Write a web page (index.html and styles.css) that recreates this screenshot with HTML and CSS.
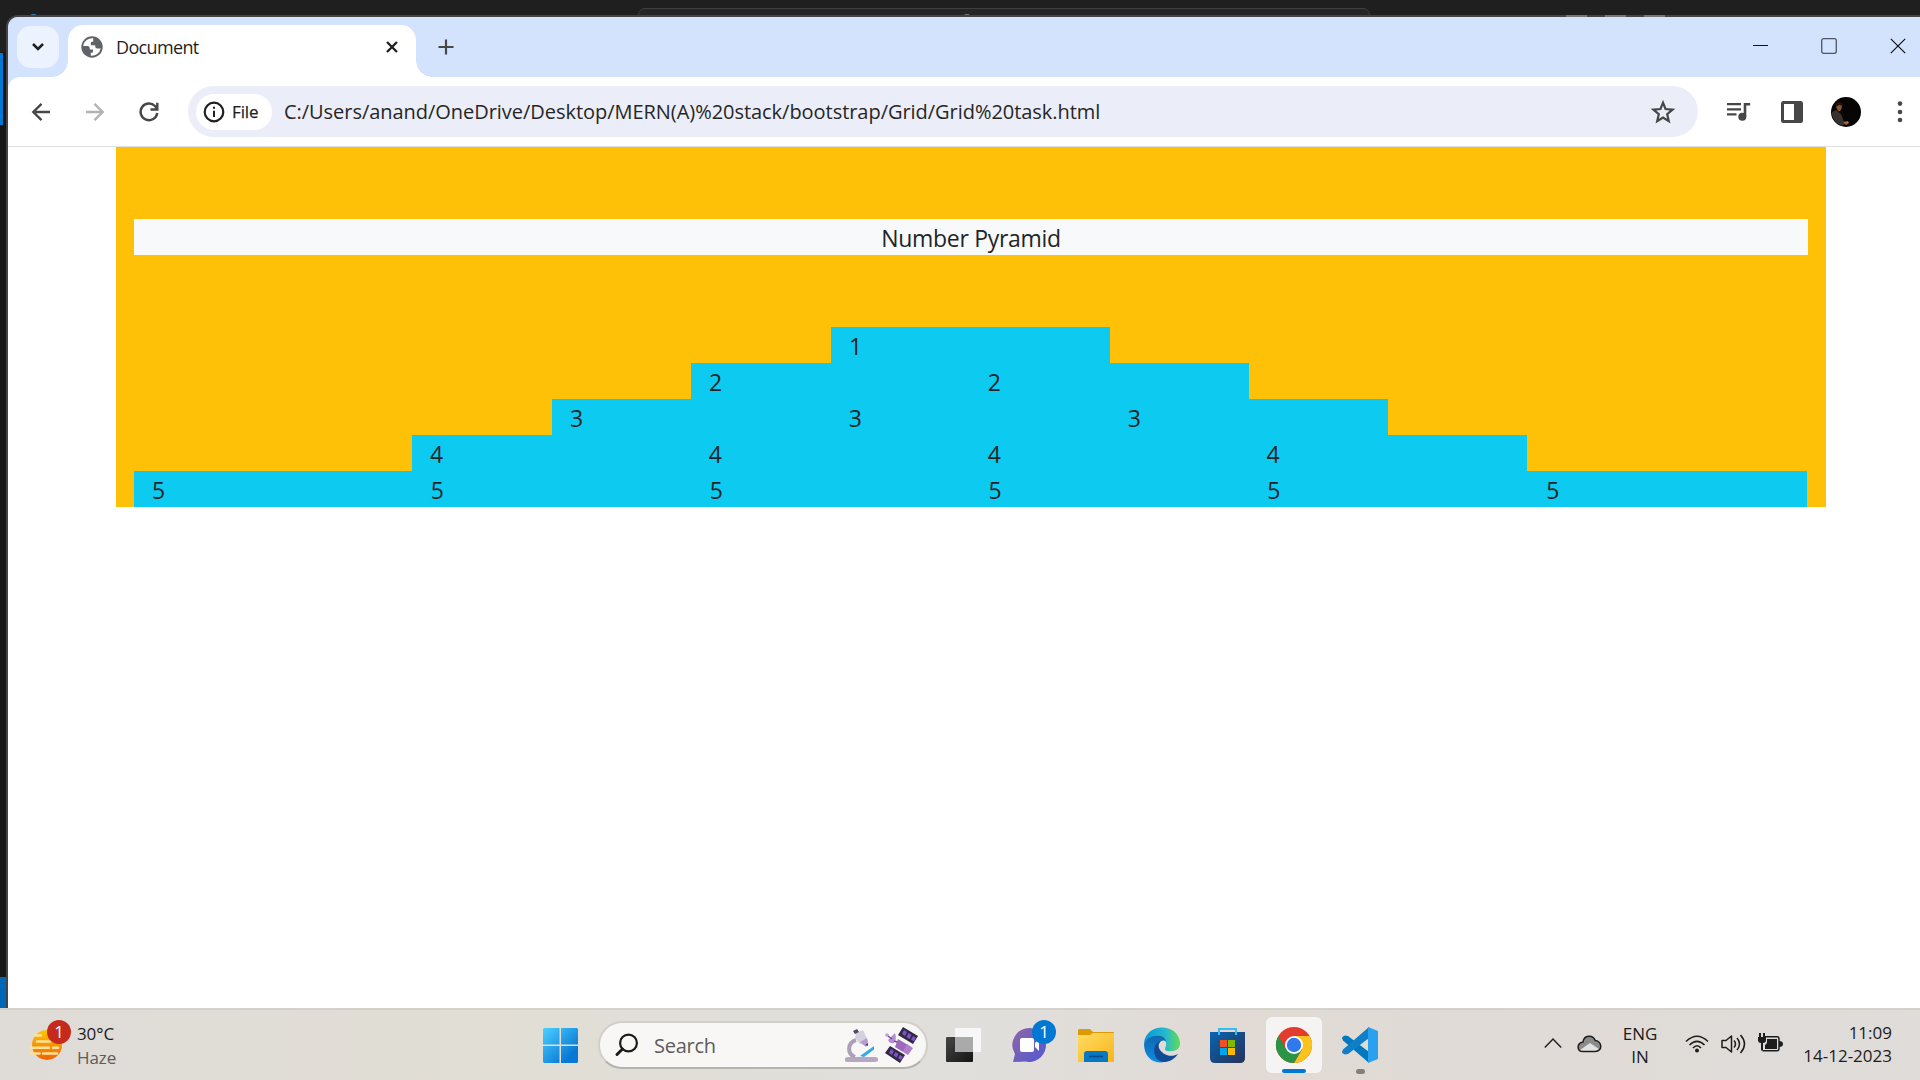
FILE: index.html
```html
<!DOCTYPE html>
<html lang="en">
<head>
<meta charset="utf-8">
<title>Document</title>
<link rel="stylesheet" href="styles.css">
</head>
<body>
<div class="desktop">
  <div class="editor">
    <div class="editor-search"><span></span></div>
    <div class="editor-logo"></div>
    <div class="editor-active"></div>
    <div class="editor-status"></div>
  </div>

  <div class="browser">
    <header class="tabs">
      <button class="tab-search"><svg width="14" height="10" viewBox="0 0 14 10"><path d="M2 2l5 5 5-5" fill="none" stroke="#1f1f1f" stroke-width="2.5"/></svg></button>
      <div class="tab">
        <svg class="globe" width="22" height="22" viewBox="0 0 22 22"><circle cx="11" cy="11" r="10.7" fill="#5f6368"/><path d="M12.200 2.300a9 9 0 0 0-10 7.700h4.300q2.300 0 2.300 2.300v1.100h3.300v2.200q0 1.200-1.200 1.200H9.800v2.900a9 9 0 0 0 9.900-7.200h-3.300q-2.200 0-2.200-2.200V9.200H9.800V7q0-1.200 1.200-1.200h1.200z" fill="#fff"/></svg>
        <span class="tab-title">Document</span>
        <svg class="tab-close" width="14" height="14" viewBox="0 0 14 14"><path d="M2 2l10 10M12 2L2 12" stroke="#1f1f1f" stroke-width="2.300"/></svg>
      </div>
      <svg class="plus" width="16" height="16" viewBox="0 0 16 16"><path d="M8 .5v15M.5 8h15" stroke="#474747" stroke-width="2.200"/></svg>
      <div class="window-controls">
        <svg width="16" height="16" viewBox="0 0 16 16"><path d="M1 7.500h15" stroke="#111"/></svg>
        <svg width="16" height="16" viewBox="0 0 16 16"><rect x=".7" y=".7" width="14.600" height="14.600" rx="2" fill="none" stroke="#4d5563" stroke-width="1.300"/></svg>
        <svg width="16" height="16" viewBox="0 0 16 16"><path d="M.8.8l14.400 14.400M15.200.8L.8 15.200" stroke="#111" stroke-width="1.200"/></svg>
      </div>
    </header>
    <nav class="toolbar">
      <svg class="back" width="20" height="20" viewBox="0 0 20 20"><path d="M19 10H2.500M10.500 1.800L2.300 10l8.200 8.200" fill="none" stroke="#474747" stroke-width="2.400"/></svg>
      <svg class="forward" width="20" height="20" viewBox="0 0 20 20"><path d="M1 10h16.500M9.500 1.800l8.200 8.200-8.200 8.200" fill="none" stroke="#b3b3b3" stroke-width="2.400"/></svg>
      <svg class="reload" width="20" height="20" viewBox="0 0 20 20"><path d="M18.300 11A8.400 8.400 0 1 1 16 4l2 2.500M18.300.8v6.700H11.500" fill="none" stroke="#474747" stroke-width="2.400"/></svg>
      <div class="address">
        <div class="chip"><svg width="22" height="22" viewBox="0 0 22 22"><circle cx="11" cy="11" r="9.300" fill="none" stroke="#1f1f1f" stroke-width="2.200"/><path d="M11 9.700v6.300M11 5.800v2" stroke="#1f1f1f" stroke-width="2"/></svg><span>File</span></div>
        <span class="url">C:/Users/anand/OneDrive/Desktop/MERN(A)%20stack/bootstrap/Grid/Grid%20task.html</span>
        <svg class="star" width="24" height="24" viewBox="0 0 24 24"><path d="M12 2.700l2.500 6.300 7.100.6-5.400 4.600 1.600 7L12 17.500l-5.800 3.700 1.600-7-5.400-4.600 7.100-.6z" fill="none" stroke="#474747" stroke-width="2.200"/></svg>
      </div>
      <svg class="media" width="24" height="20" viewBox="0 0 24 20"><path d="M0 2.200h14M0 7.300h14M0 12.300h9.500" stroke="#474747" stroke-width="2.300"/><circle cx="15.300" cy="14.700" r="4" fill="#474747"/><path d="M18 15V2.200h5.200" fill="none" stroke="#474747" stroke-width="2.600"/></svg>
      <svg class="panel" width="22" height="22" viewBox="0 0 22 22"><rect width="22" height="22" rx="2.500" fill="#474747"/><path d="M3 3h10v16H3z" fill="#fff"/></svg>
      <svg class="avatar" width="30" height="30" viewBox="0 0 30 30"><circle cx="15" cy="15" r="15" fill="#060504"/><path d="M1 15l4-2 5 4 2 5 2 5-3 2q-8-3-10-11z" fill="#37322e"/><path d="M5 7q4-1 6 1l-.5 4q-1.500 3-3.500 2L5 10z" fill="#8c5728"/><path d="M4 8q2-4 7-2l1 3-4-1-3 2z" fill="#21150d"/><path d="M12 25l5-1 1 2-3 2z" fill="#a86936"/></svg>
      <svg class="more" width="6" height="24" viewBox="0 0 6 24"><g fill="#474747"><circle cx="3" cy="3.600" r="2.300"/><circle cx="3" cy="12" r="2.300"/><circle cx="3" cy="20" r="2.300"/></g></svg>
    </nav>
    <main class="page">
      <section class="container">
        <h1>Number Pyramid</h1>
        <div class="row row-1"><b>1</b></div>
        <div class="row row-2"><b>2</b><b>2</b></div>
        <div class="row row-3"><b>3</b><b>3</b><b>3</b></div>
        <div class="row row-4"><b>4</b><b>4</b><b>4</b><b>4</b></div>
        <div class="row row-5"><b>5</b><b>5</b><b>5</b><b>5</b><b>5</b><b>5</b></div>
      </section>
    </main>
  </div>

  <footer class="taskbar">
    <div class="weather">
      <div class="icon-wrap">
        <svg width="34" height="32" viewBox="0 0 34 32"><defs><linearGradient id="sun" x2="0" y2="1"><stop stop-color="#ffc500"/><stop offset="1" stop-color="#ed6408"/></linearGradient></defs><circle cx="18" cy="16" r="15" fill="url(#sun)"/><path d="M6 6.500h6M8 12.500h13M5 18.700h15M24 18.700h5M1.500 18.700h7M1.500 24.500h9M14 24.500h14" stroke="#ffe199" stroke-width="2.600" stroke-linecap="round"/></svg>
        <em class="badge red">1</em>
      </div>
      <div class="weather-text"><span>30°C</span><span>Haze</span></div>
    </div>

    <div class="apps">
      <svg class="start" width="35" height="35" viewBox="0 0 35 35"><defs><linearGradient id="win" x2="1" y2="1" gradientUnits="userSpaceOnUse" x1="0" y1="0" gradientTransform="scale(35)"><stop stop-color="#4cd0ff"/><stop offset=".8" stop-color="#0878d4"/></linearGradient></defs><path d="M1 0h15.500v16.500H0V1zM18 0h16l1 1v15.500H18zM0 18h16.500v17H1l-1-1zM18 18h17v16l-1 1H18z" fill="url(#win)"/></svg>
      <div class="search">
        <svg width="24" height="24" viewBox="0 0 24 24"><circle cx="13.500" cy="10" r="8.400" fill="none" stroke="#1b1b1b" stroke-width="2.200"/><path d="M7.500 16L2 21.500" stroke="#1b1b1b" stroke-width="3" stroke-linecap="round"/></svg>
        <span>Search</span>
        <svg class="scope" width="34" height="34" viewBox="0 0 34 34"><path d="M12 12C3 15 3 26 11 29" fill="none" stroke="#aaa0b7" stroke-width="4"/><path d="M16 28L30 18v3.500L20 29z" fill="#31a9ef"/><path d="M12 5l7-3 5 11-2 4-6-1-5-6z" fill="#d5d0df"/><path d="M16 14l7-4 1 5-2 4z" fill="#b79bd6"/><path d="M9 3l4-2 2 3-4 2zM21 17l3-2v3z" fill="#53495f"/><path d="M1 31q0-2 3-2h27q3 0 3 2v2q-2 1-4 1H4q-3 0-3-1z" fill="#b5a7c1"/></svg>
        <svg class="satellite" width="34" height="36" viewBox="0 0 34 36"><path d="M18 0l15 9-5 8-15-9zM5 19l15 9-5 8L0 26z" fill="#302844"/><path d="M19 3l3 2-2 4-3-2zM23.500 6l3 2-2 4-3-2zM28 9l3 1.500-2 4-3-2zM6 22l3 2-2 4-3-2zM10.500 25l3 2-2 3.500-3-2zM15 28l3 1.500-2 3.500-3-2z" fill="#8053c5"/><path d="M13 12l10 6-5 7-8-5z" fill="#9d6abd"/><path d="M22 17l6 4-5 7-5-3z" fill="#b07fcd"/><path d="M10 6q2 6-1 10-4 1-6-3z" fill="#b58dd3"/><circle cx="2" cy="8" r="1.800" fill="#c09be2"/><path d="M9 14l3 1M3 9l4 3" stroke="#6d4a8c" stroke-width="1.500"/></svg>
      </div>
      <svg class="taskview" width="36" height="35" viewBox="0 0 36 35"><defs><linearGradient id="tv" x2="1" y2="1"><stop stop-color="#454545"/><stop offset="1" stop-color="#151515"/></linearGradient></defs><rect y="9" width="27" height="25" rx="1" fill="url(#tv)"/><path d="M9 0h26v24H9z" fill="#f7f7f7"/><path d="M9 9h18v15H9z" fill="#aaa"/></svg>
      <div class="chat icon-wrap">
        <svg width="36" height="35" viewBox="0 0 36 35"><defs><linearGradient id="chat" x2="1" y2="1"><stop stop-color="#8e66a8"/><stop offset="1" stop-color="#5059d1"/></linearGradient></defs><path d="M18 0a17 17 0 1 1-5 33.500L1 34l2-8A17 17 0 0 1 18 0z" fill="url(#chat)"/><rect x="8" y="10" width="14" height="14" rx="2" fill="#fff"/><path d="M23 15l4-4v12l-4-4z" fill="#fff"/></svg>
        <em class="badge blue">1</em>
      </div>
      <svg class="folder" width="36" height="33" viewBox="0 0 36 33"><defs><linearGradient id="fol" x2="1" y2="1"><stop stop-color="#ffdc62"/><stop offset="1" stop-color="#f9b51b"/></linearGradient></defs><path d="M0 1l1-1h11l3 3h21v8H0z" fill="#dc9a07"/><path d="M0 6h12l3-2h21v29H0z" fill="url(#fol)"/><path d="M6 33v-8q0-3 3-3h18q3 0 3 3v8z" fill="#0878c5"/><path d="M11 27.500h14" stroke="#064c87" stroke-width="1.700"/></svg>
      <svg class="edge" width="36" height="36" viewBox="0 0 36 36"><defs><linearGradient id="e1" x2="1"><stop stop-color="#0794da"/><stop offset=".6" stop-color="#26b9cd"/><stop offset="1" stop-color="#63dc51"/></linearGradient><linearGradient id="e2" x2="0" y2="1"><stop stop-color="#1266b1"/><stop offset="1" stop-color="#0a8ee4"/></linearGradient></defs><path d="M0 17C1-4 33-5 36 15c1 8-6 10-13 9-3-1-2-3-1-5C24 9 7 6 0 17z" fill="url(#e1)"/><path d="M0 17C4 7 20 6 22 14c-5-2-9 2-9 8 0 7 6 12 13 11C15 39 0 34 0 17z" fill="url(#e2)"/><path d="M17 14c-9 1-10 20 3 21 7 0 11-4 14-8-7 4-16 1-19-6-1-3 0-5 2-7z" fill="#114b96"/></svg>
      <svg class="store" width="35" height="35" viewBox="0 0 35 35"><defs><linearGradient id="st" x2="1" y2="1"><stop stop-color="#0864b1"/><stop offset="1" stop-color="#283257"/></linearGradient></defs><path d="M0 4h35v26q0 5-5 5H5q-5 0-5-5z" fill="url(#st)"/><path d="M9 7V1h17v6" fill="none" stroke="#38bcf3" stroke-width="2"/><path d="M10 12h7v7h-7z" fill="#f25022"/><path d="M18 12h7v7h-7z" fill="#7fba00"/><path d="M10 20h7v7h-7z" fill="#00a4ef"/><path d="M18 20h7v7h-7z" fill="#ffb900"/></svg>
      <div class="active-app">
        <svg width="36" height="36" viewBox="0 0 36 36"><circle cx="18" cy="18" r="18" fill="#e33b2e"/><path d="M18 9h15.600A18 18 0 0 1 18 36l7.800-13.500z" fill="#fcc31e"/><path d="M2.400 9A18 18 0 0 0 18 36l7.800-13.500-15.600 0z" fill="#299446"/><circle cx="18" cy="18" r="9" fill="#fff"/><circle cx="18" cy="18" r="7.200" fill="#2f78ed"/></svg>
        <i></i>
      </div>
      <div class="code">
        <svg width="36" height="36" viewBox="0 0 36 36"><path d="M0 11q0-1 1-1.500l2-1 3 .5 21 16v11L1 13.500z" fill="#0078c0"/><path d="M0 25q0 1 1 1.500l2 1 3-.5 21-16V0L1 22.500z" fill="#0f80c8"/><path d="M26 0l10 4v28l-10 4z" fill="#2aa1ee"/></svg><i></i>
      </div>
    </div>

    <div class="tray">
      <svg class="chev" width="18" height="12" viewBox="0 0 18 12"><path d="M.8 10.500L9 2l8.200 8.500" fill="none" stroke="#222" stroke-width="1.500"/></svg>
      <svg class="cloud" width="25" height="18" viewBox="0 0 25 18"><path d="M6 16.500C-.5 16.500-.5 8 6 7 7-.5 16-.5 18.300 5.500c7 .5 7.500 11 0 11z" fill="#8b8b8b"/><path d="M3 15l10-7 9 6-3 2.500H6z" fill="#e2e2e2"/><path d="M6 16.500C-.5 16.500-.5 8 6 7 7-.5 16-.5 18.300 5.500c7 .5 7.500 11 0 11z" fill="none" stroke="#1d1d1d" stroke-width="1.500"/></svg>
      <div class="lang"><span>ENG</span><span>IN</span></div>
      <svg class="wifi" width="24" height="18" viewBox="0 0 24 18"><path d="M1 6.500Q12-4 23 6.500M4.500 10Q12 2.600 19.500 10M8 13Q12 8.500 16 13" fill="none" stroke="#1d1d1d" stroke-width="1.600"/><circle cx="12" cy="15.500" r="2" fill="#1d1d1d"/></svg>
      <svg class="volume" width="25" height="20" viewBox="0 0 25 20"><path d="M1 6.500h4L10.500 2v16L5 13.500H1z" fill="none" stroke="#1d1d1d" stroke-width="1.500" stroke-linejoin="round"/><path d="M13 6.500q3 3.500 0 7M16 4q5 6 0 12M19.500 1q8 9 0 18" fill="none" stroke="#1d1d1d" stroke-width="1.500"/></svg>
      <svg class="battery" width="25" height="19" viewBox="0 0 25 19"><path d="M7 3.700h12q2 0 2 2v10q0 2-2 2H4.500" fill="none" stroke="#1d1d1d" stroke-width="1.500"/><path d="M9 6h10v10H7v-4q2-1 2-3zM21 8q4 0 4 3t-4 3z" fill="#1d1d1d"/><path d="M0 4h8v3q0 3-3 3v7.500H3V10Q0 10 0 7zM1 0h2v4H1zM5 0h2v4H5z" fill="#1d1d1d"/></svg>
      <div class="clock"><span>11:09</span><span>14-12-2023</span></div>
    </div>
  </footer>
  <div class="editor-dashes"><i></i><i></i><i></i></div>
</div>
</body>
</html>
```
FILE: styles.css
```css
* { box-sizing: border-box; }
body { margin: 0; font-family: "Open Sans", "Noto Sans", sans-serif; }
svg { display: block; flex: none; overflow: visible; }
.desktop { position: relative; width: 1920px; height: 1080px; overflow: hidden; background: #1e1e1e; display: flex; flex-direction: column; }

/* Editor window peeking out behind the browser */
.editor { position: absolute; inset: 0; background: linear-gradient(#1f1f1f 0 52px, #171717 53px); }
.editor-search { position: absolute; left: 638px; top: 8px; width: 732px; height: 24px; border: 1px solid #3f3f3f; border-radius: 7px; background: #252525; }
.editor-search span { position: absolute; left: 323px; top: 5px; width: 10px; height: 8px; border: 2px solid #777; border-radius: 50%; }
.editor-dashes { position: absolute; left: 1566px; top: 15px; display: flex; gap: 18px; }
.editor-dashes i { width: 21px; height: 2px; background: #777; }
.editor-logo { position: absolute; left: 30px; top: 14px; width: 7px; height: 3px; background: #3485b5; border-radius: 3px 3px 0 0; }
.editor-active { position: absolute; top: 53px; width: 3px; height: 72px; background: #0078d4; }
.editor-status { position: absolute; top: 977px; width: 8px; height: 31px; background: #0067b8; }

.browser { position: relative; margin: 15px 0 0 6px; height: 993px; border: solid #444; border-width: 2px 0 0 2px; border-radius: 12px 0 0 0; background: #d3e3fd; overflow: hidden; display: flex; flex-direction: column; flex: none; }
.tabs { height: 60px; background: #d3e3fd; display: flex; padding-left: 9px; flex: none; }
.tab-search { width: 42px; height: 42px; margin-top: 9px; padding: 0; border: 0; border-radius: 14px; background: #ecf2fe; display: flex; align-items: center; justify-content: center; }
.tab { position: relative; width: 348px; height: 52px; margin: 8px 0 0 9px; border-radius: 15px 15px 0 0; background: #fff; display: flex; align-items: center; padding: 0 17px 9px 13px; }
.tab::before, .tab::after { content: ""; position: absolute; bottom: 0; width: 16px; height: 16px; }
.tab::before { left: -16px; background: radial-gradient(circle at 0 0, transparent 15.500px, #fff 16px); }
.tab::after { right: -16px; background: radial-gradient(circle at 100% 0, transparent 15.500px, #fff 16px); }
.tab-title { margin-left: 13px; font-size: 18px; letter-spacing: -.65px; color: #1f1f1f; }
.tab-close { margin-left: auto; }
.plus { margin: 22px 0 0 22px; }
.window-controls { display: flex; gap: 53px; margin: 21px 14px 0 auto; }
.toolbar { height: 70px; border-bottom: 1px solid #dfe1e4; border-radius: 12px 0 0 0; display: flex; align-items: center; flex: none; background: #fff; }
.back { margin-left: 23px; }
.forward { margin-left: 34px; }
.reload { margin-left: 34px; }
.address { width: 1510px; height: 51px; margin-left: 29px; border-radius: 26px; background: #ebeef8; display: flex; align-items: center; padding: 0 23px 0 8px; }
.chip { width: 76px; height: 36px; border-radius: 18px; background: #fff; display: flex; align-items: center; padding-left: 7px; font-size: 17px; font-weight: 500; letter-spacing: -.1px; color: #1f1f1f; -webkit-text-stroke: .25px #1f1f1f; }
.chip span { margin-left: 7px; }
.url { margin-left: 12px; font-size: 20px; letter-spacing: -.04px; color: #262626; white-space: nowrap; }
.star { margin-left: auto; }
.media { margin-left: 29px; }
.panel { margin-left: 30px; }
.avatar { margin-left: 28px; }
.more { margin-left: 36px; }

.page { flex: 1; background: #fff; }
.container { width: 1710px; height: 360px; margin-left: 108px; padding: 72px 18px 0; background: #ffc107; color: #212529; font-size: 24px; line-height: 36px; }
h1 { margin: 0 0 72px; height: 36px; background: #f8f9fa; font-size: 23px; line-height: 39px; font-weight: 400; letter-spacing: -.3px; text-align: center; }
.row { display: grid; grid-auto-flow: column; grid-auto-columns: 278.84px; width: max-content; height: 36px; background: #0dcaf0; }
.row-1 { margin-left: 697px; }
.row-2 { margin-left: 557px; }
.row-3 { margin-left: 418px; }
.row-4 { margin-left: 278px; }
.row b { padding-left: 18px; font-size: 23px; font-weight: 400; line-height: 39px; height: 36px; }

.taskbar { position: relative; height: 72px; border-top: 2px solid #d4d1cb; background: linear-gradient(90deg, #dfdbd7, #e1ded5 28%, #e0dfdc 50%, #e1dad5 65%, #dfdcd9); display: flex; color: #1c1c1c; flex: none; }
.icon-wrap { position: relative; }
.badge { position: absolute; width: 24px; height: 24px; border-radius: 50%; color: #fff; font-style: normal; font-size: 17px; line-height: 24px; text-align: center; }
.badge.red { left: 18px; top: -9px; background: #c42b1c; }
.badge.blue { left: 20px; top: -8px; background: #0078d4; }
.weather { width: 543px; padding: 19px 0 0 29px; display: flex; }
.weather-text { display: flex; flex-direction: column; margin: -7px 0 0 14px; font-size: 17px; line-height: 24px; letter-spacing: -.1px; }
.weather-text span + span { color: #5d5b59; }
.apps { display: flex; align-items: flex-start; }
.start { margin-top: 18px; }
.search { width: 330px; height: 48px; margin: 11px 0 0 20px; border: 2px solid #d2cfca; border-bottom-color: #b5b3ae; border-radius: 24px; background: #f8f7f5; display: flex; align-items: center; padding-left: 15px; font-size: 20px; letter-spacing: -.25px; color: #5c5c5c; }
.search > span { width: 80px; margin-left: 15px; }
.scope { margin-left: 110px; }
.satellite { margin-left: 7px; }
.taskview { margin: 18px 0 0 18px; }
.chat { margin: 18px 0 0 30px; }
.folder { margin: 19px 0 0 30px; }
.edge { margin: 17px 0 0 30px; }
.store { margin: 18px 0 0 30px; }
.active-app { width: 56px; height: 56px; margin: 7px 0 0 21px; border-radius: 6px; background: #f5f4f2; display: flex; flex-direction: column; align-items: center; padding-top: 10px; }
.active-app i { width: 24px; height: 5px; border-radius: 3px; background: #0078d4; margin-top: 6px; }
.code { display: flex; flex-direction: column; align-items: center; margin: 17px 0 0 20px; }
.code i { width: 9px; height: 5px; margin-top: 6px; border-radius: 3px; background: #82807d; }
.tray { margin-left: auto; padding-right: 28px; display: flex; align-items: flex-start; font-size: 17px; line-height: 23px; }
.chev { margin-top: 27px; }
.cloud { margin: 25px 0 0 15px; }
.lang { width: 44px; margin: 12px 0 0 16px; display: flex; flex-direction: column; align-items: center; }
.wifi { margin: 25px 0 0 23px; }
.volume { margin: 24px 0 0 12px; }
.battery { margin: 23px 0 0 12px; }
.clock { width: 109px; display: flex; flex-direction: column; align-items: flex-end; margin-top: 11px; letter-spacing: 0; }
```
